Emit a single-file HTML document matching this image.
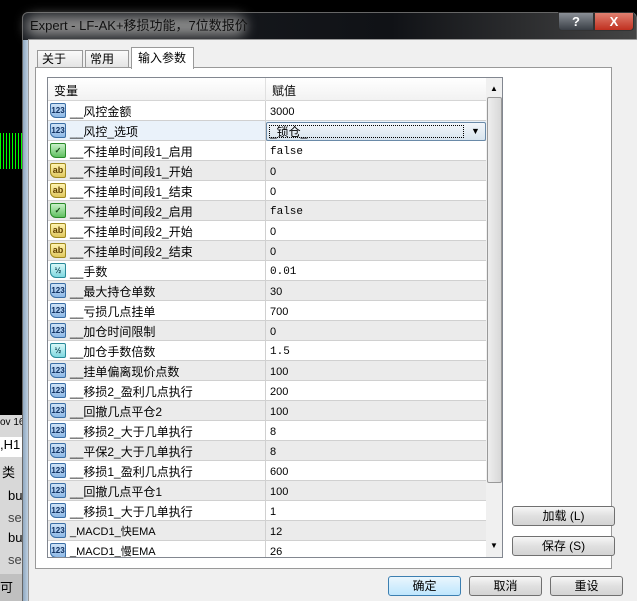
<!DOCTYPE html>
<html style="width:637px;height:601px;overflow:hidden"><head><meta charset="utf-8"><style>
*{margin:0;padding:0;box-sizing:border-box}
body{width:637px;height:601px;overflow:hidden;background:#000;position:relative;font-family:"Liberation Sans","Noto Sans CJK SC",sans-serif;font-size:12px;color:#000}
.a{position:absolute}
.row{position:absolute;left:48px;width:438px;height:20px;border-bottom:1px solid #d0d0d0}
.row .n{position:absolute;left:22px;top:1px;line-height:21px;white-space:nowrap}
.row .v{position:absolute;left:222px;top:1px;line-height:21px;font-size:11px}
.row .m{font-family:"Liberation Mono",monospace}
.row .sep{position:absolute;left:217px;top:0;width:1px;height:20px;background:#d0d0d0}
.ic{position:absolute;left:2px;top:2px;width:16px;height:15px;border:1px solid #3a6ea5;border-radius:2px 2px 2px 6px;background:linear-gradient(#cfe3f7,#8db8e6);font-size:8px;font-weight:bold;color:#103060;text-align:center;line-height:13px;font-family:"Liberation Sans",sans-serif}
.ic.ab{border-color:#a08a20;background:linear-gradient(#fff3b0,#e0c860);color:#604000;font-size:9px}
.ic.bo{border-color:#2a8a2a;background:linear-gradient(#c8f0c8,#60c060);color:#104010}
.ic.fr{border-color:#2a8a9a;background:linear-gradient(#d8f8f8,#80d8e0);color:#104050}
.btn{position:absolute;height:20px;border:1px solid #707070;border-radius:3px;background:linear-gradient(#f6f6f6,#e0e0e0 50%,#d4d4d4);text-align:center;line-height:18px;font-size:12px}
</style></head><body>
<div class="a" style="left:0;top:415px;width:23px;height:186px;background:#d8d8d8"></div>
<div class="a" style="left:0;top:417px;font-size:10px;color:#000">ov 16</div>
<div class="a" style="left:0;top:437px;width:23px;height:20px;background:#fff;font-size:13px">,H1</div>
<div class="a" style="left:2px;top:462px;font-size:13px">类</div>
<div class="a" style="left:8px;top:488px;font-size:13px">bu</div>
<div class="a" style="left:8px;top:510px;font-size:13px;color:#444">se</div>
<div class="a" style="left:8px;top:530px;font-size:13px">bu</div>
<div class="a" style="left:8px;top:552px;font-size:13px;color:#444">se</div>
<div class="a" style="left:0;top:574px;width:23px;height:27px;background:#c0c0c0;font-size:13px;line-height:27px">可用</div>
<div class="a" style="left:0;top:133px;width:22px;height:36px;background:repeating-linear-gradient(90deg,#0f0 0 1px,transparent 1px 3px)"></div>
<div class="a" style="left:22px;top:12px;width:615px;height:589px;background:linear-gradient(90deg,#1a1d22,#101216 60%,#444 100%);border:1px solid #666;border-radius:6px 6px 0 0"></div>
<div class="a" style="left:26px;top:16px;width:220px;height:20px;background:#8a8a8a;filter:blur(6px);border-radius:10px"></div>
<div class="a" style="left:30px;top:17px;font-size:13px;color:#111;line-height:17px">Expert - LF-AK+移损功能，7位数报价</div>
<div class="a" style="left:558px;top:12px;width:36px;height:19px;border:1px solid #333;border-radius:0 0 0 4px;background:linear-gradient(#8a8f96,#3a3f46);color:#fff;text-align:center;font-weight:bold;font-size:13px;line-height:17px">?</div>
<div class="a" style="left:594px;top:12px;width:40px;height:19px;border:1px solid #333;border-radius:0 0 4px 0;background:linear-gradient(#e08070,#c03020);color:#fff;text-align:center;font-weight:bold;font-size:13px;line-height:17px">X</div>
<div class="a" style="left:23px;top:40px;width:6px;height:561px;background:linear-gradient(90deg,#8fa8c0,#c8d8e8)"></div>
<div class="a" style="left:28px;top:39px;width:609px;height:562px;background:#f0f0f0;border-top:1px solid #999;border-left:1px solid #999"></div>
<div class="a" style="left:37px;top:50px;width:46px;height:18px;border:1px solid #999;background:linear-gradient(#fafafa,#e4e4e4);padding-left:4px;line-height:17px">关于</div>
<div class="a" style="left:85px;top:50px;width:44px;height:18px;border:1px solid #999;background:linear-gradient(#fafafa,#e4e4e4);padding-left:4px;line-height:17px">常用</div>
<div class="a" style="left:131px;top:47px;width:63px;height:22px;border:1px solid #999;border-bottom:none;background:#fff;padding-left:6px;line-height:20px;z-index:2">输入参数</div>
<div class="a" style="left:35px;top:67px;width:577px;height:502px;border:1px solid #999;background:#fff"></div>
<div class="a" style="left:47px;top:77px;width:456px;height:481px;border:1px solid #828790;background:#fff;overflow:hidden"></div>
<div class="a" style="left:48px;top:78px;width:438px;height:23px;background:linear-gradient(#fff,#f2f2f2);border-bottom:1px solid #d5d5d5"></div>
<div class="a" style="left:54px;top:82px;line-height:18px">变量</div>
<div class="a" style="left:265px;top:78px;width:1px;height:23px;background:#e0e0e0"></div>
<div class="a" style="left:272px;top:82px;line-height:18px">赋值</div>
<div class="a" style="left:486px;top:78px;width:16px;height:479px;background:#f0f0f0"></div>
<div class="a" style="left:490px;top:84px;font-size:8px">▲</div>
<div class="a" style="left:487px;top:97px;width:15px;height:386px;border:1px solid #999;border-radius:2px;background:linear-gradient(90deg,#eee,#d8d8d8)"></div>
<div class="a" style="left:490px;top:541px;font-size:8px">▼</div>
<div class="row" style="top:101px"><span class="ic">123</span><span class="n">__风控金额</span><span class="sep"></span><span class="v">3000</span></div>
<div class="row" style="top:121px;background:#eaf2fa"><span class="ic">123</span><span class="n">__风控_选项</span><span class="sep"></span></div>
<div class="a" style="left:266px;top:122px;width:220px;height:19px;border:1px solid #6a8aa8;border-radius:2px;background:linear-gradient(#f2f6fa,#d8e4ee)"></div>
<div class="a" style="left:269px;top:125px;width:195px;height:13px;border:1px dotted #000;font-size:12px;line-height:12px">_锁仓_</div>
<div class="a" style="left:471px;top:126px;font-size:9px">▼</div>
<div class="row" style="top:141px"><span class="ic bo">✓</span><span class="n">__不挂单时间段1_启用</span><span class="sep"></span><span class="v m">false</span></div>
<div class="row" style="top:161px;background:#ebebeb"><span class="ic ab">ab</span><span class="n">__不挂单时间段1_开始</span><span class="sep"></span><span class="v">0</span></div>
<div class="row" style="top:181px"><span class="ic ab">ab</span><span class="n">__不挂单时间段1_结束</span><span class="sep"></span><span class="v">0</span></div>
<div class="row" style="top:201px;background:#ebebeb"><span class="ic bo">✓</span><span class="n">__不挂单时间段2_启用</span><span class="sep"></span><span class="v m">false</span></div>
<div class="row" style="top:221px"><span class="ic ab">ab</span><span class="n">__不挂单时间段2_开始</span><span class="sep"></span><span class="v">0</span></div>
<div class="row" style="top:241px;background:#ebebeb"><span class="ic ab">ab</span><span class="n">__不挂单时间段2_结束</span><span class="sep"></span><span class="v">0</span></div>
<div class="row" style="top:261px"><span class="ic fr">½</span><span class="n">__手数</span><span class="sep"></span><span class="v m">0.01</span></div>
<div class="row" style="top:281px;background:#ebebeb"><span class="ic">123</span><span class="n">__最大持仓单数</span><span class="sep"></span><span class="v">30</span></div>
<div class="row" style="top:301px"><span class="ic">123</span><span class="n">__亏损几点挂单</span><span class="sep"></span><span class="v">700</span></div>
<div class="row" style="top:321px;background:#ebebeb"><span class="ic">123</span><span class="n">__加仓时间限制</span><span class="sep"></span><span class="v">0</span></div>
<div class="row" style="top:341px"><span class="ic fr">½</span><span class="n">__加仓手数倍数</span><span class="sep"></span><span class="v m">1.5</span></div>
<div class="row" style="top:361px;background:#ebebeb"><span class="ic">123</span><span class="n">__挂单偏离现价点数</span><span class="sep"></span><span class="v">100</span></div>
<div class="row" style="top:381px"><span class="ic">123</span><span class="n">__移损2_盈利几点执行</span><span class="sep"></span><span class="v">200</span></div>
<div class="row" style="top:401px;background:#ebebeb"><span class="ic">123</span><span class="n">__回撤几点平仓2</span><span class="sep"></span><span class="v">100</span></div>
<div class="row" style="top:421px"><span class="ic">123</span><span class="n">__移损2_大于几单执行</span><span class="sep"></span><span class="v">8</span></div>
<div class="row" style="top:441px;background:#ebebeb"><span class="ic">123</span><span class="n">__平保2_大于几单执行</span><span class="sep"></span><span class="v">8</span></div>
<div class="row" style="top:461px"><span class="ic">123</span><span class="n">__移损1_盈利几点执行</span><span class="sep"></span><span class="v">600</span></div>
<div class="row" style="top:481px;background:#ebebeb"><span class="ic">123</span><span class="n">__回撤几点平仓1</span><span class="sep"></span><span class="v">100</span></div>
<div class="row" style="top:501px"><span class="ic">123</span><span class="n">__移损1_大于几单执行</span><span class="sep"></span><span class="v">1</span></div>
<div class="row" style="top:521px;background:#ebebeb"><span class="ic">123</span><span class="n" style="font-size:11px">_MACD1_快EMA</span><span class="sep"></span><span class="v">12</span></div>
<div class="row" style="top:541px;height:16px;overflow:hidden;border:none"><span class="ic">123</span><span class="n" style="font-size:11px">_MACD1_慢EMA</span><span class="sep"></span><span class="v">26</span></div>
<div class="btn" style="left:512px;top:506px;width:103px">加载 (L)</div>
<div class="btn" style="left:512px;top:536px;width:103px">保存 (S)</div>
<div class="btn" style="left:388px;top:576px;width:73px;border-color:#3c7fb1;background:linear-gradient(#eaf6fd,#bee6fd)">确定</div>
<div class="btn" style="left:469px;top:576px;width:73px">取消</div>
<div class="btn" style="left:550px;top:576px;width:73px">重设</div>
</body></html>
